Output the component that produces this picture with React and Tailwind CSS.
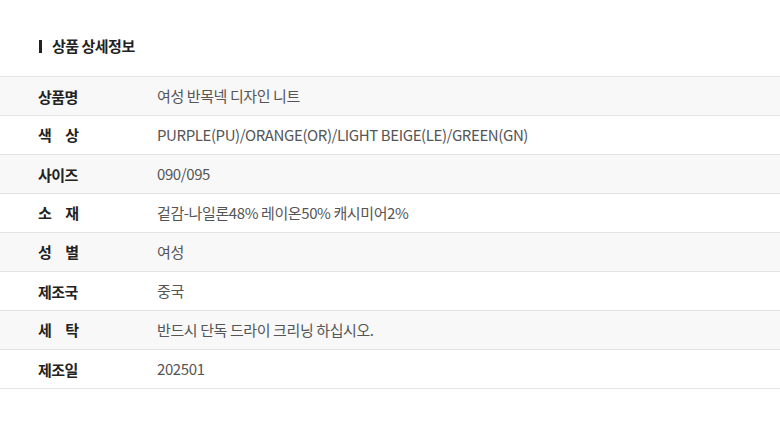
import React from "react";

const rows = [
  ["상품명", "여성 반목넥 디자인 니트", false],
  ["색상", "PURPLE(PU)/ORANGE(OR)/LIGHT BEIGE(LE)/GREEN(GN)", true],
  ["사이즈", "090/095", false],
  ["소재", "겉감-나일론48% 레이온50% 캐시미어2%", true],
  ["성별", "여성", true],
  ["제조국", "중국", false],
  ["세탁", "반드시 단독 드라이 크리닝 하십시오.", true],
  ["제조일", "202501", false],
];

export default function App() {
  return (
    <div
      className="w-[780px] h-[427px] bg-white"
      style={{ fontFamily: '"Noto Sans CJK KR", "Noto Sans", sans-serif' }}
    >
      <div className="pt-[36px] h-[76px] pl-[39px] flex items-start">
        <div className="flex items-center h-[20px]">
          <span className="w-[3px] h-[13px] bg-[#222]"></span>
          <span className="ml-[10px] text-[15px] font-bold text-[#222] tracking-[-0.5px]">
            상품 상세정보
          </span>
        </div>
      </div>
      <div className="border-t border-[#e3e3e3]">
        {rows.map(([label, value, spread], i) => (
          <div
            key={i}
            className={`flex items-center h-[39px] border-b border-[#e3e3e3] ${
              i % 2 === 0 ? "bg-[#f8f8f8]" : "bg-white"
            }`}
          >
            <div className="w-[157px] pl-[38px] shrink-0">
              {spread ? (
                <div className="w-[41px] flex justify-between text-[15px] font-bold text-[#222]">
                  <span>{label[0]}</span>
                  <span>{label[1]}</span>
                </div>
              ) : (
                <span className="text-[15px] font-bold text-[#222] tracking-[-0.6px]">
                  {label}
                </span>
              )}
            </div>
            <div className="text-[15px] text-[#555] tracking-[-0.4px]">{value}</div>
          </div>
        ))}
      </div>
    </div>
  );
}
